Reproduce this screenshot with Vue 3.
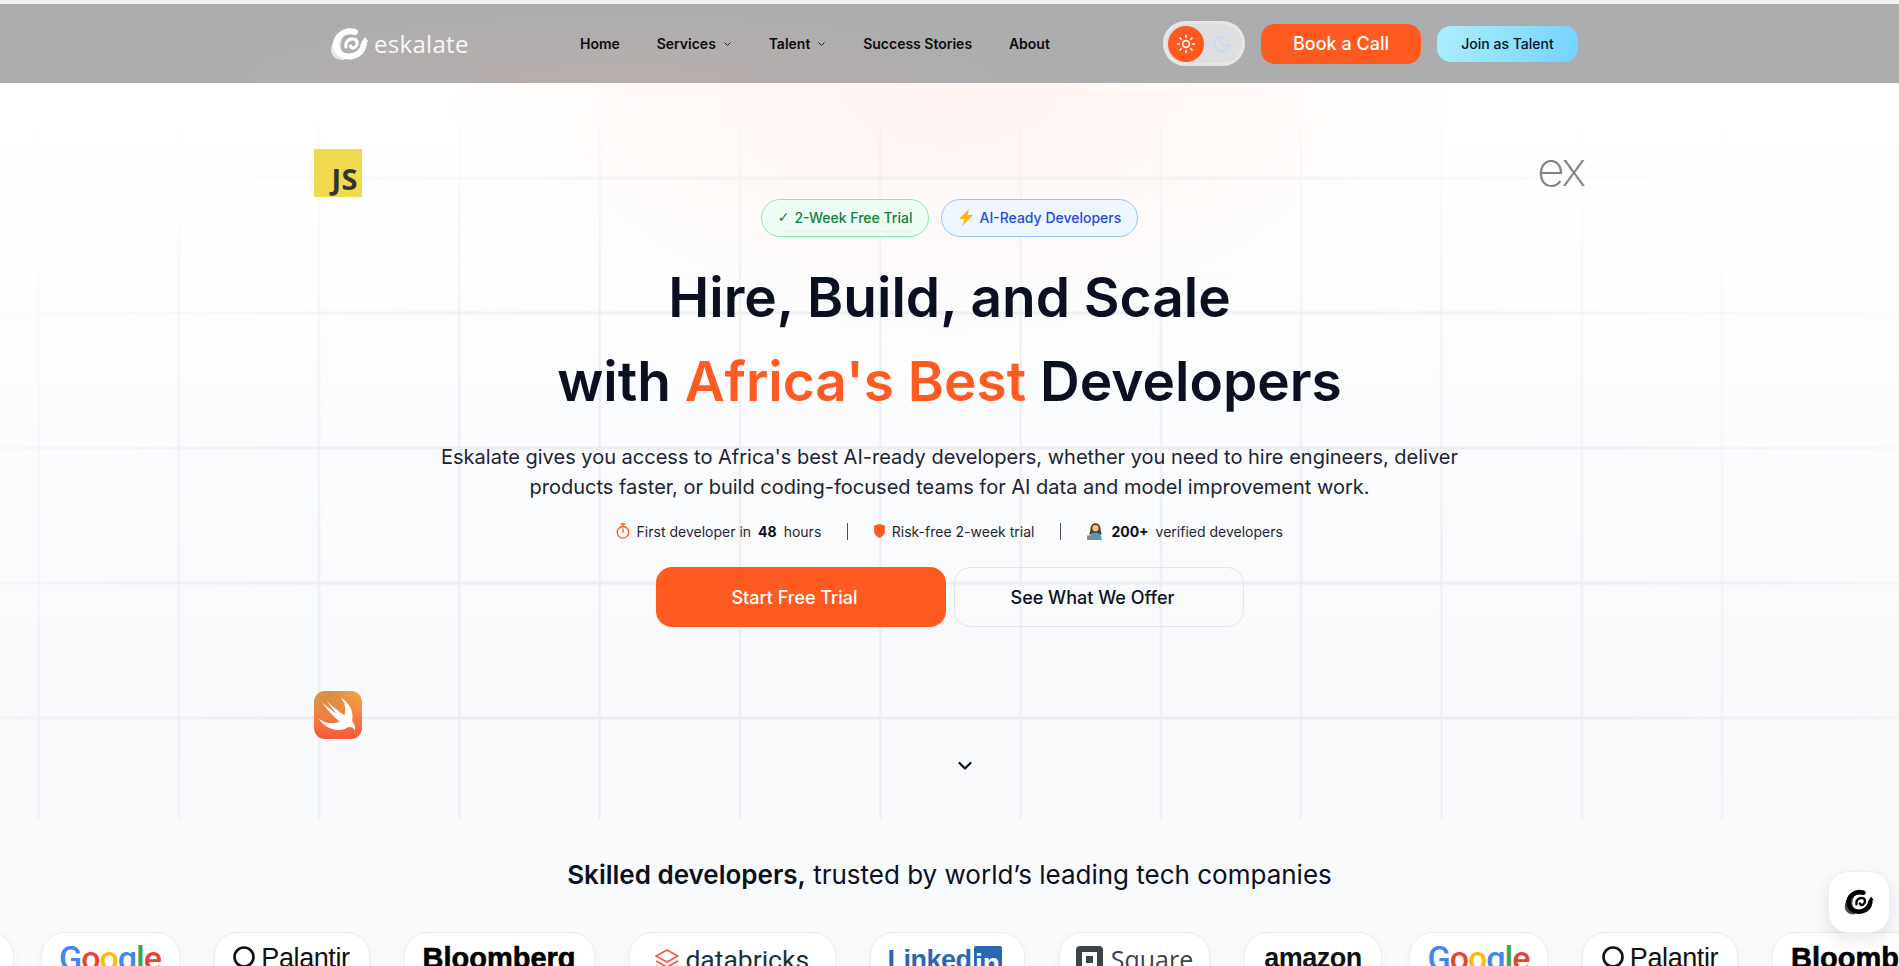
<template>
  <div class="page">
    <svg class="defs" width="0" height="0" aria-hidden="true">
      <symbol id="spiral" viewBox="0 0 40 34">
        <path opacity=".7" d="M20 1C12 2 1 14 1 23c0 6 5 10 12 10 3 0 1-6-1-9C9 18 12 8 20 1z" fill="currentColor" />
        <path d="M25 5C14 2 5 10 6 19c1 8 9 12 17 10 6-1.500 10-6 11-12" fill="none" stroke="currentColor" stroke-width="6" stroke-linecap="round" />
        <path d="M16 20c-1-5 3-9 8-8 4 1 4 6 1 8-2 1.500-4 1-4.500-1" fill="none" stroke="currentColor" stroke-width="3.200" stroke-linecap="round" />
        <path d="M35 10l3.500 5h-7z" fill="currentColor" />
      </symbol>
    </svg>

    <header class="topbar">
      <a class="brand">
        <svg class="brand-mark"><use href="#spiral" /></svg>
        <span class="brand-name">eskalate</span>
      </a>
      <nav class="nav">
        <a v-for="link in navLinks" :key="link.label" class="nav-link">
          {{ link.label }}
          <svg v-if="link.menu" width="9" height="8" viewBox="0 0 9 8" fill="none" stroke="#222" stroke-width="1">
            <path d="M1.500 2.500l3 3 3-3" />
          </svg>
        </a>
      </nav>
      <div class="actions">
        <div class="theme-toggle">
          <span class="theme-sun">
            <svg width="20" height="20" viewBox="0 0 24 24" fill="none" stroke="#fff" stroke-width="2" stroke-linecap="round">
              <circle cx="12" cy="12" r="4" />
              <path d="M12 2v2M12 20v2M4.900 4.900l1.400 1.400M17.700 17.700l1.400 1.400M2 12h2M20 12h2M4.900 19.100l1.400-1.400M17.700 6.300l1.400-1.400" />
            </svg>
          </span>
          <svg class="theme-moon" width="20" height="20" viewBox="0 0 24 24" fill="none" stroke="#c6d9f3" stroke-width="2">
            <path d="M12 3a6 6 0 0 0 9 9 9 9 0 1 1-9-9z" />
          </svg>
        </div>
        <button class="btn-call">Book a Call</button>
        <button class="btn-talent">Join as Talent</button>
      </div>
    </header>

    <section class="hero">
      <div class="grid-lines grid-h"></div>
      <div class="grid-lines grid-v"></div>

      <div class="float-js">JS</div>
      <div class="float-ex">ex</div>
      <div class="float-swift">
        <svg width="48" height="48" viewBox="0 0 24 24" fill="#fff">
          <path d="M13.543 3.410c4.114 2.470 6.545 7.162 5.549 11.131-.024.093-.05.181-.076.272l.002.001c2.062 2.538 1.500 5.258 1.236 4.745-1.072-2.086-3.066-1.568-4.088-1.043a6.803 6.803 0 0 1-.281.158l-.02.012-.002.002c-2.115 1.123-4.957 1.205-7.812-.022a12.568 12.568 0 0 1-5.640-4.838c.649.480 1.350.902 2.097 1.252 3.019 1.414 6.051 1.311 8.197-.002C9.651 12.730 7.101 9.670 5.146 7.191a10.628 10.628 0 0 1-1.005-1.384c2.340 2.142 6.038 4.830 7.365 5.576C8.690 8.408 6.208 4.743 6.324 4.860c4.436 4.470 8.528 6.996 8.528 6.996.154.085.270.154.360.213.085-.215.160-.437.224-.668.708-2.588-.090-5.548-1.893-7.992z" />
        </svg>
      </div>

      <div class="badges">
        <span class="badge badge-green"><span class="check">✓</span> 2-Week Free Trial</span>
        <span class="badge badge-blue">
          <svg width="16" height="17" viewBox="0 0 16 17"><path d="M11 0L1 10h5.500L4 17l11-11H9.500z" fill="#f9b31c" /></svg>
          AI-Ready Developers
        </span>
      </div>

      <h1 class="title">
        Hire, Build, and Scale<br />
        with <span class="accent">Africa's Best</span> Developers
      </h1>
      <p class="lead">
        Eskalate gives you access to Africa's best AI-ready developers, whether you need to hire engineers, deliver
        products faster, or build coding-focused teams for AI data and model improvement work.
      </p>

      <div class="stats">
        <span class="stat">
          <svg class="stat-icon" width="14" height="16" viewBox="0 0 14 16" fill="none" stroke="#ff5a1f" stroke-width="1.300">
            <circle cx="7" cy="9.300" r="5.800" />
            <path d="M5 1h4M7 1v2.500M7 6v3.300" stroke-linecap="round" />
          </svg>
          First developer in <b>48</b> hours
        </span>
        <i class="stat-sep"></i>
        <span class="stat">
          <svg class="stat-icon" width="11" height="14" viewBox="0 0 10 13"><path d="M0 1.500L5 0l5 1.500V7c0 3-3 5-5 6-2-1-5-3-5-6z" fill="#ff5a1f" /></svg>
          Risk-free 2-week trial
        </span>
        <i class="stat-sep"></i>
        <span class="stat">
          <svg width="17" height="18" viewBox="0 0 15 16">
            <path d="M3 7c-.5-8 9.500-8 9 0l1 4H2z" fill="#5a3a22" />
            <circle cx="7.500" cy="5.500" r="2.800" fill="#f7c08a" />
            <path d="M2 16c0-5 2-6.500 5.500-6.500S13 11 13 16z" fill="#2fa8c9" />
            <path d="M0 12h9l1.500 4H0z" fill="#7f8c96" />
          </svg>
          <b>200+</b> verified developers
        </span>
      </div>

      <div class="cta">
        <button class="btn-primary"><span>Start Free Trial</span></button>
        <button class="btn-ghost"><span>See What We Offer</span></button>
      </div>

      <svg class="scroll-hint" width="18" height="12" viewBox="0 0 18 12" fill="none" stroke="#0b1020" stroke-width="2.200" stroke-linecap="round" stroke-linejoin="round">
        <path d="M3.500 3l5.500 5.500L14.500 3" />
      </svg>
    </section>

    <section class="trusted">
      <h2 class="trusted-title"><b>Skilled developers,</b> trusted by world’s leading tech companies</h2>
      <div class="marquee">
        <div v-for="n in 3" :key="n" class="marquee-set">
          <div class="logo-card card-google">
            <span class="lg-google"><i class="g-b">G</i><i class="g-r">o</i><i class="g-y">o</i><i class="g-b">g</i><i class="g-g">l</i><i class="g-r">e</i></span>
          </div>
          <div class="logo-card card-palantir">
            <svg width="22" height="34" viewBox="0 0 22 34" fill="none" stroke="#111" stroke-width="2.600">
              <circle cx="11" cy="13" r="9.500" />
              <path d="M1 29h20" />
            </svg>
            <span class="lg-palantir">Palantir</span>
          </div>
          <div class="logo-card card-bloomberg"><span class="lg-bloomberg">Bloomberg</span></div>
          <div class="logo-card card-databricks">
            <svg width="24" height="30" viewBox="0 0 24 30" fill="none" stroke="#ff4f38" stroke-width="1.600">
              <path d="M12 2L1 8l11 6 11-6zM1 13l11 6 11-6M1 18l11 6 11-6" />
            </svg>
            <span class="lg-databricks">databricks</span>
          </div>
          <div class="logo-card card-linkedin">
            <span class="lg-linked">Linked</span><span class="lg-in">in</span>
          </div>
          <div class="logo-card card-square">
            <span class="square-mark"><i></i></span>
            <span class="lg-square">Square</span>
          </div>
          <div class="logo-card card-amazon">
            <span class="lg-amazon">amazon</span>
            <i class="smile"></i>
          </div>
        </div>
      </div>
    </section>

    <button class="chat-btn">
      <svg width="31" height="28"><use href="#spiral" /></svg>
    </button>
  </div>
</template>

<script setup>
const navLinks = [
  { label: 'Home' },
  { label: 'Services', menu: true },
  { label: 'Talent', menu: true },
  { label: 'Success Stories' },
  { label: 'About' }
]
</script>

<style>
html,
body {
  margin: 0;
  background: #fff;
  overflow: hidden;
}
</style>

<style scoped>
.page {
  position: relative;
  height: 966px;
  overflow: hidden;
  padding-top: 4px;
  box-sizing: border-box;
  background: #f1f1f1;
  font-family: Inter, "Noto Sans", sans-serif;
  color: #0b1020;
}

.defs {
  position: absolute;
}

/* top bar */
.topbar {
  display: flex;
  align-items: center;
  height: 79px;
  padding: 0 321px 0 330px;
  background: radial-gradient(ellipse 480px 90px at 620px 84px, #b9aeac, rgba(185, 174, 172, 0)), #acadaf;
}

.brand {
  display: flex;
  align-items: center;
  gap: 4px;
  width: 250px;
  color: #fff;
}

.brand-mark {
  width: 40px;
  height: 34px;
}

.brand-name {
  font-family: "Open Sans", sans-serif;
  font-size: 24px;
  font-weight: 400;
  letter-spacing: 0.3px;
  color: #f8f8f8;
}

.nav {
  display: flex;
  gap: 36.800px;
}

.nav-link {
  display: flex;
  align-items: center;
  gap: 7px;
  font-size: 14px;
  font-weight: 600;
  color: #0c0c0e;
}

.actions {
  display: flex;
  align-items: center;
  gap: 16px;
  margin-left: auto;
}

.theme-toggle {
  display: flex;
  align-items: center;
  gap: 8px;
  width: 82px;
  height: 45px;
  padding: 0 0 0 2px;
  box-sizing: border-box;
  background: #dcdedf;
  border: 3px solid #e6e7e7;
  border-radius: 999px;
}

.theme-sun {
  display: flex;
  align-items: center;
  justify-content: center;
  width: 36px;
  height: 36px;
  border-radius: 50%;
  background: #ff5a1f;
}

button {
  border: 0;
  font-family: inherit;
  padding: 0;
}

.btn-call {
  width: 160px;
  height: 40px;
  border-radius: 14px;
  background: #ff5a1f;
  color: #fff;
  font-size: 18px;
  font-weight: 500;
}

.btn-talent {
  width: 141px;
  height: 36px;
  border-radius: 14px;
  background: linear-gradient(110deg, #adeeff, #72d3ff);
  color: #0b1020;
  font-size: 14px;
  font-weight: 500;
}

/* hero */
.hero {
  position: relative;
  display: flex;
  flex-direction: column;
  align-items: center;
  height: 736px;
  padding-top: 116px;
  box-sizing: border-box;
  background:
    radial-gradient(ellipse 520px 260px at 950px 0, rgba(255, 96, 40, 0.07), rgba(255, 96, 40, 0)),
    linear-gradient(#fff, #f9fafc 75%);
}

.grid-lines {
  position: absolute;
  top: 42px;
  bottom: 0;
  -webkit-mask-image: radial-gradient(ellipse 1150px 720px at 50% 88%, #000 55%, rgba(0, 0, 0, 0.1) 100%);
  mask-image: radial-gradient(ellipse 1150px 720px at 50% 88%, #000 55%, rgba(0, 0, 0, 0.1) 100%);
}

.grid-h {
  left: 0;
  right: 0;
  background: linear-gradient(transparent 0, #ebedf1 1px, #ebedf1 3px, transparent 4px) 0 51px / 100% 135px repeat-y;
}

.grid-v {
  left: 37px;
  width: 1690px;
  background: linear-gradient(90deg, transparent 0, #ebedf1 1px, #ebedf1 2px, transparent 3px) 0 0 / 140.300px 100% repeat-x;
}

.float-js {
  position: absolute;
  left: 314px;
  top: 66px;
  display: flex;
  align-items: flex-end;
  justify-content: flex-end;
  width: 48px;
  height: 48px;
  padding: 0 4px 0 0;
  box-sizing: border-box;
  background: #f0da4e;
  font-family: "Open Sans", sans-serif;
  font-size: 29px;
  font-weight: 700;
  line-height: 36px;
  letter-spacing: 0.5px;
  color: #333330;
}

.float-ex {
  position: absolute;
  left: 1537px;
  top: 58px;
  font-size: 48px;
  font-weight: 200;
  line-height: 56px;
  letter-spacing: -2px;
  color: #808080;
}

.float-swift {
  position: absolute;
  left: 314px;
  top: 608px;
  display: flex;
  align-items: center;
  justify-content: center;
  width: 48px;
  height: 48px;
  border-radius: 11px;
  background:
    radial-gradient(circle at 30% 0, rgba(180, 120, 70, 0.55), rgba(180, 120, 70, 0) 60%),
    linear-gradient(#fbab44, #f4573c);
}

.badges,
.title,
.lead,
.stats,
.cta,
.scroll-hint {
  position: relative;
}

.badges {
  display: flex;
  gap: 12px;
}

.badge {
  display: flex;
  align-items: center;
  gap: 5px;
  height: 38px;
  padding: 0 16px 2px;
  box-sizing: border-box;
  border: 1px solid;
  border-radius: 999px;
  font-size: 14px;
  font-weight: 500;
}

.badge-green {
  background: #edfdf3;
  border-color: #86efac;
  color: #15803d;
}

.badge-blue {
  background: #eff6ff;
  border-color: #93c5fd;
  color: #1d4ed8;
}

.check {
  font-family: "DejaVu Sans", sans-serif;
  font-size: 14px;
}

.title {
  margin: 19px 0 0;
  font-size: 55px;
  font-weight: 600;
  line-height: 83.500px;
  text-align: center;
  color: #0b1020;
}

.accent {
  color: #ff5a1f;
}

.lead {
  width: 1040px;
  margin: 19px 0 0;
  font-size: 20px;
  line-height: 30px;
  text-align: center;
  color: #1c2333;
}

.stats {
  display: flex;
  align-items: center;
  gap: 26px;
  margin-top: 19px;
  height: 20px;
  font-size: 14px;
  color: #1f2533;
}

.stat {
  display: flex;
  align-items: center;
  gap: 7px;
}

.stat-icon {
  margin-right: -0.500px;
}

.stat b {
  font-weight: 700;
  color: #0b1020;
}

.stat-sep {
  width: 1px;
  height: 17px;
  background: #475063;
}

.cta {
  display: flex;
  gap: 8px;
  margin-top: 26px;
}

.btn-primary,
.btn-ghost {
  width: 290px;
  height: 60px;
  border-radius: 16px;
  font-size: 18px;
  font-weight: 500;
}

.btn-primary span,
.btn-ghost span {
  margin-right: 12px;
}

.btn-primary {
  background: #ff5a1f;
  color: #fff;
}

.btn-ghost {
  background: transparent;
  border: 1px solid #e3e5ea;
  color: #0b1020;
}

.scroll-hint {
  margin: 133px 0 0 30px;
}

/* logos */
.trusted {
  height: 147px;
  padding-top: 38px;
  box-sizing: border-box;
  background: #f9fafc;
}

.trusted-title {
  margin: 0;
  font-size: 26px;
  font-weight: 400;
  line-height: 36px;
  text-align: center;
  color: #0b1020;
}

.trusted-title b {
  font-weight: 600;
}

.marquee {
  display: flex;
  gap: 27px;
  margin: 39px 0 0 -1328px;
}

.marquee-set {
  display: flex;
  flex: none;
  gap: 34px;
}

.logo-card {
  position: relative;
  display: flex;
  flex: none;
  justify-content: center;
  gap: 6px;
  height: 80px;
  padding-top: 5px;
  box-sizing: border-box;
  background: #fff;
  border: 1px solid #ececef;
  border-radius: 24px;
  box-shadow: 0 4px 14px rgba(15, 23, 42, 0.04);
  line-height: 40px;
}

.card-google { width: 139px; }
.card-palantir { width: 156px; }
.card-bloomberg { width: 191px; }
.card-databricks { width: 207.500px; }
.card-linkedin { width: 155px; gap: 2px; }
.card-square { width: 151px; gap: 8px; }
.card-amazon { width: 138px; }

.lg-google {
  font-family: Roboto, sans-serif;
  font-size: 34px;
  font-weight: 500;
  letter-spacing: -1px;
}

.lg-google i {
  font-style: normal;
}

.g-b { color: #4285f4; }
.g-r { color: #ea4335; }
.g-y { color: #fbbc05; }
.g-g { color: #34a853; }

.lg-palantir {
  font-family: "Liberation Sans", sans-serif;
  font-size: 27px;
  letter-spacing: -0.4px;
  color: #111;
}

.card-palantir svg {
  margin-top: 6px;
}

.lg-bloomberg {
  font-family: "Liberation Sans", sans-serif;
  font-size: 29px;
  font-weight: 700;
  -webkit-text-stroke: 0.6px #000;
  color: #000;
}

.card-databricks svg {
  margin-top: 10px;
}

.lg-databricks {
  font-family: Roboto, sans-serif;
  font-size: 26.500px;
  line-height: 44px;
  color: #1b3139;
}

.lg-linked {
  font-family: "Liberation Sans", sans-serif;
  font-size: 27px;
  font-weight: 700;
  line-height: 44px;
  letter-spacing: -0.5px;
  color: #2867b2;
}

.lg-in {
  width: 28px;
  height: 28px;
  margin: 8px 6px 0 0;
  border-radius: 2px;
  background: #2867b2;
  font-family: "Liberation Sans", sans-serif;
  font-size: 28px;
  font-weight: 700;
  line-height: 36px;
  text-align: center;
  color: #fff;
}

.square-mark {
  display: flex;
  align-items: center;
  justify-content: center;
  width: 27px;
  height: 27px;
  margin-top: 8px;
  box-sizing: border-box;
  border: 6px solid #3e4348;
  border-radius: 4px;
}

.square-mark i {
  width: 7px;
  height: 7px;
  background: #3e4348;
}

.lg-square {
  font-family: "Open Sans", sans-serif;
  font-size: 25px;
  font-weight: 400;
  line-height: 42px;
  color: #3e4348;
}

.lg-amazon {
  font-family: "Liberation Sans", sans-serif;
  font-size: 27px;
  font-weight: 700;
  letter-spacing: -0.5px;
  color: #111;
}

.smile {
  position: absolute;
  left: 62px;
  top: 33px;
  width: 26px;
  height: 6px;
  border-bottom: 2px solid #f90;
  border-radius: 50%;
}

.chat-btn {
  position: absolute;
  right: 9px;
  bottom: 33px;
  display: flex;
  align-items: center;
  justify-content: center;
  width: 62px;
  height: 62px;
  border-radius: 20px;
  background: #fff;
  border: 1px solid #eeeff2;
  box-shadow: 0 6px 16px rgba(15, 23, 42, 0.1);
  color: #000;
}
</style>
